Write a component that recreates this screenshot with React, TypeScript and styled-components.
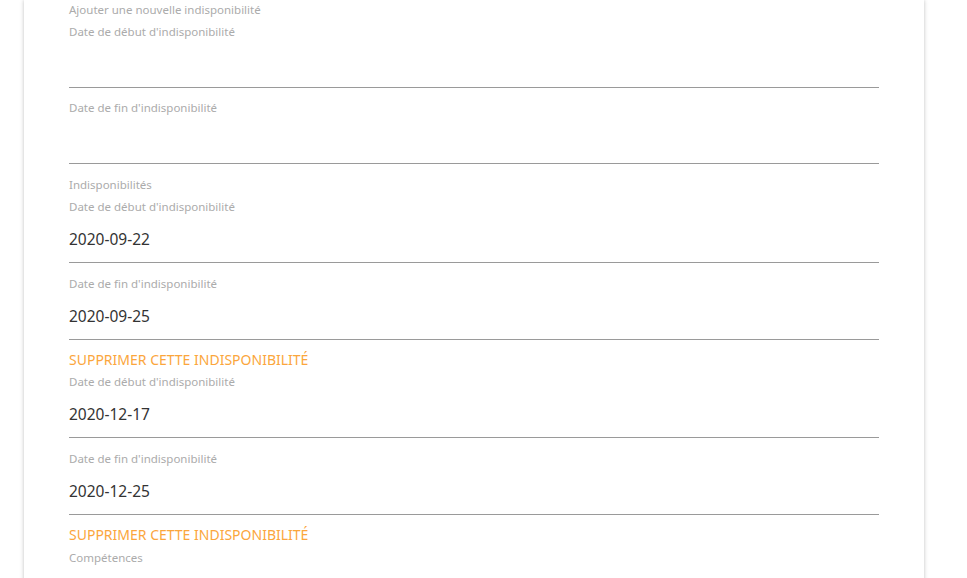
import React from "react";
import styled, { createGlobalStyle } from "styled-components";

const Global = createGlobalStyle`
  html, body { margin: 0; padding: 0; background: #ffffff; }
  body { font-family: "Noto Sans", "Open Sans", sans-serif; overflow: hidden; }
`;

const Page = styled.div`
  display: flex;
  padding: 0 0 0 24px;
`;

const Card = styled.div`
  width: 900px;
  box-sizing: border-box;
  background: #fff;
  box-shadow: 0 0 4px rgba(0, 0, 0, 0.25);
  padding: 2px 45px 40px 45px;
  display: flex;
  flex-direction: column;
`;

const SectionTitle = styled.div<{ $mt?: number }>`
  font-size: 11.5px;
  line-height: 16px;
  color: #ababab;
  margin-top: ${(p) => p.$mt ?? 0}px;
  margin-bottom: 6px;
`;

const Field = styled.div`
  display: flex;
  flex-direction: column;
`;

const Label = styled.label`
  font-size: 11.5px;
  line-height: 16px;
  color: #ababab;
`;

const Input = styled.div`
  height: 47px;
  border-bottom: 1px solid #9a9a9a;
  display: flex;
  align-items: center;
  font-size: 15.5px;
  color: #333;
`;

const Group = styled.div<{ $gap?: number }>`
  display: flex;
  flex-direction: column;
  gap: ${(p) => p.$gap ?? 12}px;
`;

const DeleteButton = styled.div`
  font-size: 14px;
  line-height: 22px;
  color: #fba63c;
  text-transform: uppercase;
  margin: -4px 0 3px;
  cursor: pointer;
`;

type Period = { start: string; end: string };

const periods: Period[] = [
  { start: "2020-09-22", end: "2020-09-25" },
  { start: "2020-12-17", end: "2020-12-25" },
];

const DateField = ({ label, value }: { label: string; value?: string }) => (
  <Field>
    <Label>{label}</Label>
    <Input>{value}</Input>
  </Field>
);

export default function App() {
  return (
    <>
      <Global />
      <Page>
        <Card>
          <SectionTitle>Ajouter une nouvelle indisponibilité</SectionTitle>
          <Group>
            <DateField label="Date de début d'indisponibilité" />
            <DateField label="Date de fin d'indisponibilité" />
          </Group>
          <SectionTitle $mt={13}>Indisponibilités</SectionTitle>
          {periods.map((p) => (
            <Group key={p.start} $gap={13}>
              <DateField label="Date de début d'indisponibilité" value={p.start} />
              <DateField label="Date de fin d'indisponibilité" value={p.end} />
              <DeleteButton>Supprimer cette indisponibilité</DeleteButton>
            </Group>
          ))}
          <SectionTitle $mt={1}>Compétences</SectionTitle>
        </Card>
      </Page>
    </>
  );
}
